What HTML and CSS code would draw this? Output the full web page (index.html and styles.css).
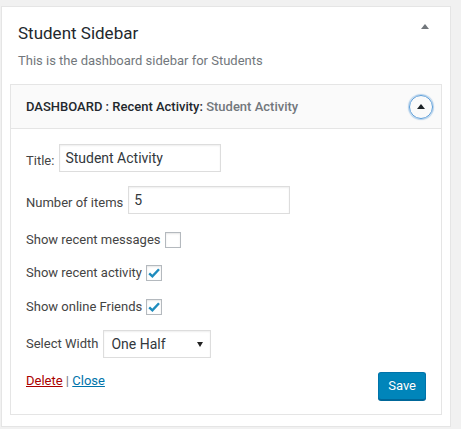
FILE: index.html
```html
<!DOCTYPE html>
<html lang="en">
<head>
<meta charset="utf-8">
<title>Student Sidebar</title>
<link rel="stylesheet" href="styles.css">
</head>
<body>
<div class="sidebar">
  <div class="sidebar-head">
    <h2 class="sidebar-title">Student Sidebar</h2>
    <span class="sidebar-arrow"><svg width="8" height="5" viewBox="0 0 8 5"><path d="M0 5 L4 0 L8 5 Z" fill="#72777c"/></svg></span>
  </div>
  <p class="sidebar-desc">This is the dashboard sidebar for Students</p>

  <div class="widget">
    <div class="widget-top">
      <h3 class="widget-title">DASHBOARD : Recent Activity:<span class="in-title"> Student Activity</span></h3>
      <span class="widget-toggle"><svg width="8" height="5" viewBox="0 0 8 5"><path d="M0 5 L4 0 L8 5 Z" fill="#1d2327"/></svg></span>
    </div>
    <div class="widget-inside">
      <div class="row row-text">
        <label class="lbl lbl-text" for="w-title">Title:</label>
        <input class="text-input" id="w-title" type="text" value="Student Activity">
      </div>
      <div class="row row-text gap-14">
        <label class="lbl lbl-text" for="w-num">Number of items</label>
        <input class="text-input" id="w-num" type="text" value="5">
      </div>
      <div class="row row-check gap-17">
        <label class="lbl" for="w-msg">Show recent messages</label>
        <input class="check" id="w-msg" type="checkbox">
      </div>
      <div class="row row-check gap-15">
        <label class="lbl" for="w-act">Show recent activity</label>
        <input class="check" id="w-act" type="checkbox" checked>
      </div>
      <div class="row row-check gap-16">
        <label class="lbl" for="w-fr">Show online Friends</label>
        <input class="check" id="w-fr" type="checkbox" checked>
      </div>
      <div class="row row-select gap-14">
        <label class="lbl" for="w-width">Select Width</label>
        <select class="select" id="w-width">
          <option>One Half</option>
          <option>Full Width</option>
          <option>One Third</option>
        </select>
      </div>
      <div class="actions">
        <div class="links">
          <a class="link-delete" href="#">Delete</a><span class="sep"> | </span><a class="link-close" href="#">Close</a>
        </div>
        <button class="btn-save" type="button">Save</button>
      </div>
    </div>
  </div>
</div>
</body>
</html>
```
FILE: styles.css
```css
* { box-sizing: border-box; }

html, body {
  margin: 0;
  padding: 0;
  background: #f1f1f1;
}

body {
  font-family: "Segoe UI", Roboto, "Liberation Sans", sans-serif;
  font-size: 13px;
  line-height: 18px;
  color: #444;
}

.sidebar {
  margin: 6px 0 0 1px;
  width: 450px;
  height: 421px;
  background: #fff;
  border: 1px solid #e5e5e5;
  padding: 16px 8px 0 8px;
}

.sidebar-head {
  display: flex;
  justify-content: space-between;
  align-items: flex-start;
}

.sidebar-title {
  margin: 0;
  padding-left: 8px;
  font-size: 17px;
  line-height: 20px;
  font-weight: 400;
  color: #23282d;
}

.sidebar-arrow {
  display: block;
  width: 8px;
  height: 5px;
  margin: 1px 13px 0 0;
}
.sidebar-arrow svg { display: block; }

.sidebar-desc {
  margin: 9px 0 14px;
  padding-left: 8px;
  color: #72777c;
  line-height: 18px;
}

.widget {
  border: 1px solid #e5e5e5;
  background: #fff;
}

.widget-top {
  display: flex;
  align-items: center;
  justify-content: space-between;
  height: 44px;
  background: #fafafa;
  border-bottom: 1px solid #e5e5e5;
  padding: 0 8px 0 15px;
}

.widget-title {
  margin: 0;
  font-size: 13px;
  line-height: 13px;
  font-weight: 500;
  color: #23282d;
  white-space: nowrap;
}

.in-title {
  color: #72777c;
}

.widget-toggle {
  display: flex;
  align-items: center;
  justify-content: center;
  width: 24px;
  height: 24px;
  border-radius: 50%;
  border: 1px solid #5b9dd9;
  box-shadow: 0 0 1px 1px rgba(91, 157, 217, 0.45);
}
.widget-toggle svg { display: block; margin-top: -1px; }

.widget-inside {
  padding: 15px 15px 14px 15px;
}

.row {
  display: flex;
  align-items: center;
}
.row-text { gap: 5px; }
.row-select { gap: 5px; }
.row-check { gap: 4px; }

.gap-14 { margin-top: 14px; }
.gap-15 { margin-top: 15px; }
.gap-16 { margin-top: 16px; }
.gap-17 { margin-top: 17px; }

.lbl {
  color: #444;
  white-space: nowrap;
}
.lbl-text {
  padding-top: 5px;
}

.text-input {
  width: 162px;
  height: 28px;
  margin: 0;
  padding: 3px 5px;
  border: 1px solid #ddd;
  border-radius: 0;
  box-shadow: inset 0 1px 2px rgba(0, 0, 0, 0.07);
  background: #fff;
  font-family: inherit;
  font-size: 14px;
  line-height: 20px;
  color: #32373c;
  outline: none;
}

.check {
  -webkit-appearance: none;
  appearance: none;
  width: 16px;
  height: 16px;
  margin: 0;
  border: 1px solid #b4b9be;
  background: #fff center / 14px 14px no-repeat;
  box-shadow: inset 0 1px 2px rgba(0, 0, 0, 0.1);
}
.check:checked {
  background-image: url("data:image/svg+xml,%3Csvg xmlns='http://www.w3.org/2000/svg' viewBox='0 0 14 14'%3E%3Cpath d='M2.2 7.3 L5.4 10.4 L12 3.2' fill='none' stroke='%231e8cbe' stroke-width='2.4'/%3E%3C/svg%3E");
}

.select {
  -webkit-appearance: none;
  appearance: none;
  width: 108px;
  height: 28px;
  margin: 0;
  padding: 0 20px 0 7px;
  border: 1px solid #ddd;
  border-radius: 0;
  box-shadow: inset 0 1px 2px rgba(0, 0, 0, 0.07);
  background: #fff url("data:image/svg+xml,%3Csvg xmlns='http://www.w3.org/2000/svg' viewBox='0 0 6 5'%3E%3Cpath d='M0 0 L6 0 L3 5 Z' fill='%23222'/%3E%3C/svg%3E") no-repeat right 7px center / 6px 5px;
  font-family: inherit;
  font-size: 14px;
  line-height: 26px;
  color: #32373c;
  outline: none;
}

.actions {
  display: flex;
  justify-content: space-between;
  align-items: flex-start;
  margin-top: 14px;
}

.links {
  line-height: 18px;
}

.link-delete {
  color: #a00;
  text-decoration: underline;
}
.sep {
  color: #72777c;
}
.link-close {
  color: #0073aa;
  text-decoration: underline;
}

.btn-save {
  height: 28px;
  margin: 0;
  padding: 0 9px;
  border: 1px solid #0073aa;
  border-bottom-color: #006799;
  border-radius: 3px;
  background: #0085ba;
  box-shadow: 0 1px 0 #006799;
  color: #fff;
  font-family: inherit;
  font-size: 13px;
  line-height: 26px;
  text-shadow: 0 -1px 1px rgba(0, 103, 153, 0.6);
  cursor: pointer;
}
```
